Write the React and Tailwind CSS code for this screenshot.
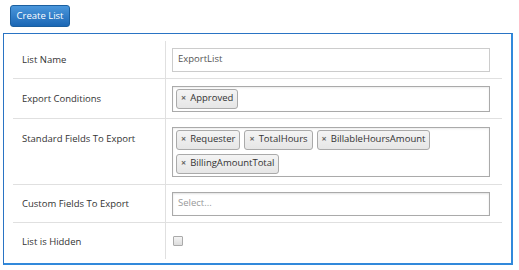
import React from "react";

const rows = [
  { label: "List Name", kind: "text", value: "ExportList", h: "h-[38px]" },
  { label: "Export Conditions", kind: "tags", tags: ["Approved"], h: "h-[40px]" },
  {
    label: "Standard Fields To Export",
    kind: "tags",
    tags: ["Requester", "TotalHours", "BillableHoursAmount", "BillingAmountTotal"],
    h: "h-[66px]",
  },
  { label: "Custom Fields To Export", kind: "select", h: "h-[38px]" },
  { label: "List is Hidden", kind: "checkbox", h: "h-[36px]" },
];

const Tag = ({ name }) => (
  <span className="flex items-center h-[20px] px-[4px] gap-[4px] rounded-[3px] border border-[#aaaaaa] bg-gradient-to-b from-[#f4f4f4] to-[#e6e6e6] text-[#333]">
    <span className="text-[9px] font-bold text-[#666] leading-none -mt-[3px]">×</span>
    <span>{name}</span>
  </span>
);

const Field = ({ row }) => {
  if (row.kind === "text") {
    return (
      <div className="h-[24px] border border-[#cccccc] flex items-center px-[5px] text-[#555]">
        {row.value}
      </div>
    );
  }
  if (row.kind === "tags") {
    return (
      <div className="border border-[#aaaaaa] shadow-[inset_0_1px_2px_rgba(0,0,0,0.08)] flex flex-wrap gap-[4px] px-[3px] py-[2px]">
        {row.tags.map((t) => (
          <Tag key={t} name={t} />
        ))}
      </div>
    );
  }
  if (row.kind === "select") {
    return (
      <div className="h-[24px] border border-[#aaaaaa] shadow-[inset_0_1px_2px_rgba(0,0,0,0.12)] flex items-center px-[5px] text-[#999]">
        Select...
      </div>
    );
  }
  return (
    <div className="w-[10px] h-[10px] border border-[#aaaaaa] rounded-[1px] bg-gradient-to-b from-[#f4f4f4] to-[#dddddd] ml-[1px]" />
  );
};

const App = () => {
  return (
    <div className="w-[519px] h-[270px] bg-white pt-[5px] font-['Open_Sans',sans-serif] text-[9.5px]">
      <button className="ml-[10px] h-[22px] w-[60px] rounded-[3px] bg-gradient-to-b from-[#4a97dc] to-[#1a67b5] border border-[#1b5f9f] text-white text-[9.5px]">
        Create List
      </button>

      <div className="mt-[6px] ml-[3px] w-[510px] h-[232px] border-t border-l border-[#2a74c4] border-r-2 border-b-2 border-r-[#3189db] border-b-[#3189db] pl-[9px] pr-[9px] pt-[7px]">
        <div className="flex flex-col">
          {rows.map((row, i) => (
            <div
              key={row.label}
              className={`flex ${row.h} ${i < rows.length - 1 ? "border-b border-[#e0e0e0]" : ""}`}
            >
              <div
                className={`w-[153px] shrink-0 pl-[9px] border-r border-[#e0e0e0] text-[#333] ${
                  row.kind === "tags" && row.tags.length > 1 ? "pt-[13px]" : "flex items-center pt-[2px]"
                }`}
              >
                {row.label}
              </div>
              <div className="flex-1 pl-[6px] pr-[12px] flex flex-col justify-center">
                <Field row={row} />
              </div>
            </div>
          ))}
        </div>
      </div>
    </div>
  );
};

export default App;
